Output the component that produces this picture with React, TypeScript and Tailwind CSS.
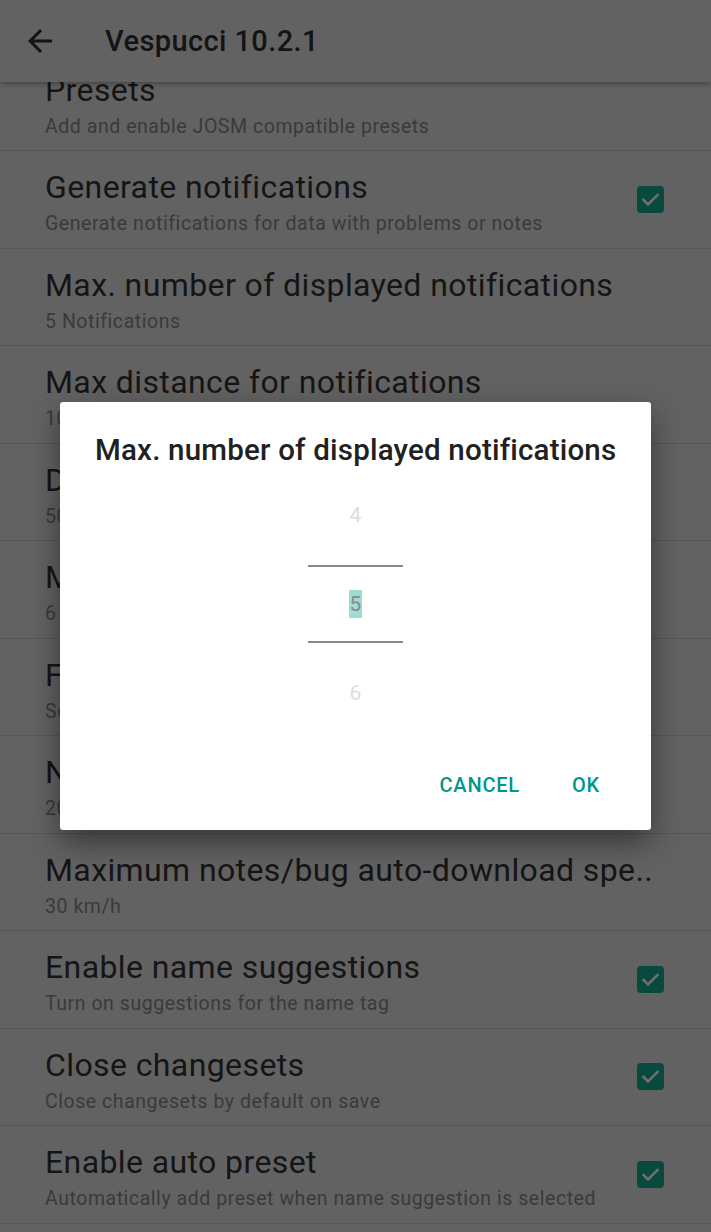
import React from 'react';

interface Pref {
  title: string;
  summary: string;
  checked?: boolean;
}

const prefs: Pref[] = [
  { title: 'Presets', summary: 'Add and enable JOSM compatible presets' },
  { title: 'Generate notifications', summary: 'Generate notifications for data with problems or notes', checked: true },
  { title: 'Max. number of displayed notifications', summary: '5 Notifications' },
  { title: 'Max distance for notifications', summary: '100 m' },
  { title: 'Download radius', summary: '50 m' },
  { title: 'Maximum auto-download speed', summary: '6 km/h' },
  { title: 'Fill pan and zoom', summary: 'Set the default behaviour' },
  { title: 'Notes/bug auto-download radius', summary: '200 m' },
  { title: 'Maximum notes/bug auto-download spe..', summary: '30 km/h' },
  { title: 'Enable name suggestions', summary: 'Turn on suggestions for the name tag', checked: true },
  { title: 'Close changesets', summary: 'Close changesets by default on save', checked: true },
  { title: 'Enable auto preset', summary: 'Automatically add preset when name suggestion is selected', checked: true },
];

const Checkbox: React.FC = () => (
  <div className="w-[27px] h-[27px] rounded-[4px] bg-[#094a40] flex items-center justify-center shrink-0">
    <svg width="27" height="27" viewBox="0 0 27 27">
      <polyline points="6.5,14 11,18.5 20.5,9" fill="none" stroke="#6e6e6e" strokeWidth="2.6" strokeLinecap="square" />
    </svg>
  </div>
);

const PrefRow: React.FC<{ pref: Pref }> = ({ pref }) => (
  <div className="h-[97.5px] border-b border-[#565656] flex items-center pl-[45px] pr-[47px]">
    <div className="flex-1 min-w-0 self-start">
      <div className="text-[32px] tracking-[0.4px] leading-[36px] text-[#151515] whitespace-nowrap mt-[18px]">{pref.title}</div>
      <div className="text-[19.5px] tracking-[0.55px] leading-[24px] text-[#3a3a3a] whitespace-nowrap mt-[7px]">{pref.summary}</div>
    </div>
    {pref.checked && <Checkbox />}
  </div>
);

const App: React.FC = () => {
  return (
    <div
      className="relative w-[711px] h-[1232px] overflow-hidden bg-[#626262]"
      style={{ fontFamily: 'Roboto, "Noto Sans", sans-serif' }}
    >
      <div className="relative z-10 h-[82px] bg-[#626262] flex items-center shadow-[0_2px_5px_rgba(0,0,0,0.3)]">
        <svg className="ml-[22px]" width="36" height="36" viewBox="0 0 24 24">
          <path d="M20 11H7.83l5.59-5.59L12 4l-8 8 8 8 1.41-1.41L7.83 13H20v-2z" fill="#141414" />
        </svg>
        <div className="ml-[47px] text-[29px] tracking-[0.4px] font-medium text-[#141414] leading-none">Vespucci 10.2.1</div>
      </div>

      <div className="-mt-[28.5px]">
        {prefs.map((p, i) => (
          <PrefRow key={i} pref={p} />
        ))}
      </div>

      <div className="absolute left-[60px] top-[402px] w-[591px] h-[428px] bg-white rounded-[3px] shadow-[0_12px_30px_rgba(0,0,0,0.45)] z-20 flex flex-col">
        <div className="pt-[32px] pl-[35px] text-[29.5px] tracking-[0.2px] leading-[32px] font-medium text-[#212121] whitespace-nowrap">
          Max. number of displayed notifications
        </div>
        <div className="mt-[20px] w-[95px] mx-auto flex flex-col">
          <div className="h-[60px] flex items-center justify-center text-[21px] text-[#dcdcdc]">4</div>
          <div className="h-[19px]" />
          <div className="h-[2px] bg-[#8a8a8a]" />
          <div className="h-[74px] flex items-center justify-center">
            <span className="bg-[#9fdcd3] text-[#8a8a8a] text-[21px] leading-[28px] px-[1px]">5</span>
          </div>
          <div className="h-[2px] bg-[#8a8a8a]" />
          <div className="h-[102px] flex items-center justify-center text-[21px] text-[#dcdcdc]">6</div>
        </div>
        <div className="mt-[16px] h-[48px] flex items-center justify-end pr-[51px] gap-[52px] text-[20px] tracking-[0.8px] font-medium text-[#009688]">
          <span>CANCEL</span>
          <span>OK</span>
        </div>
      </div>
    </div>
  );
};

export default App;
